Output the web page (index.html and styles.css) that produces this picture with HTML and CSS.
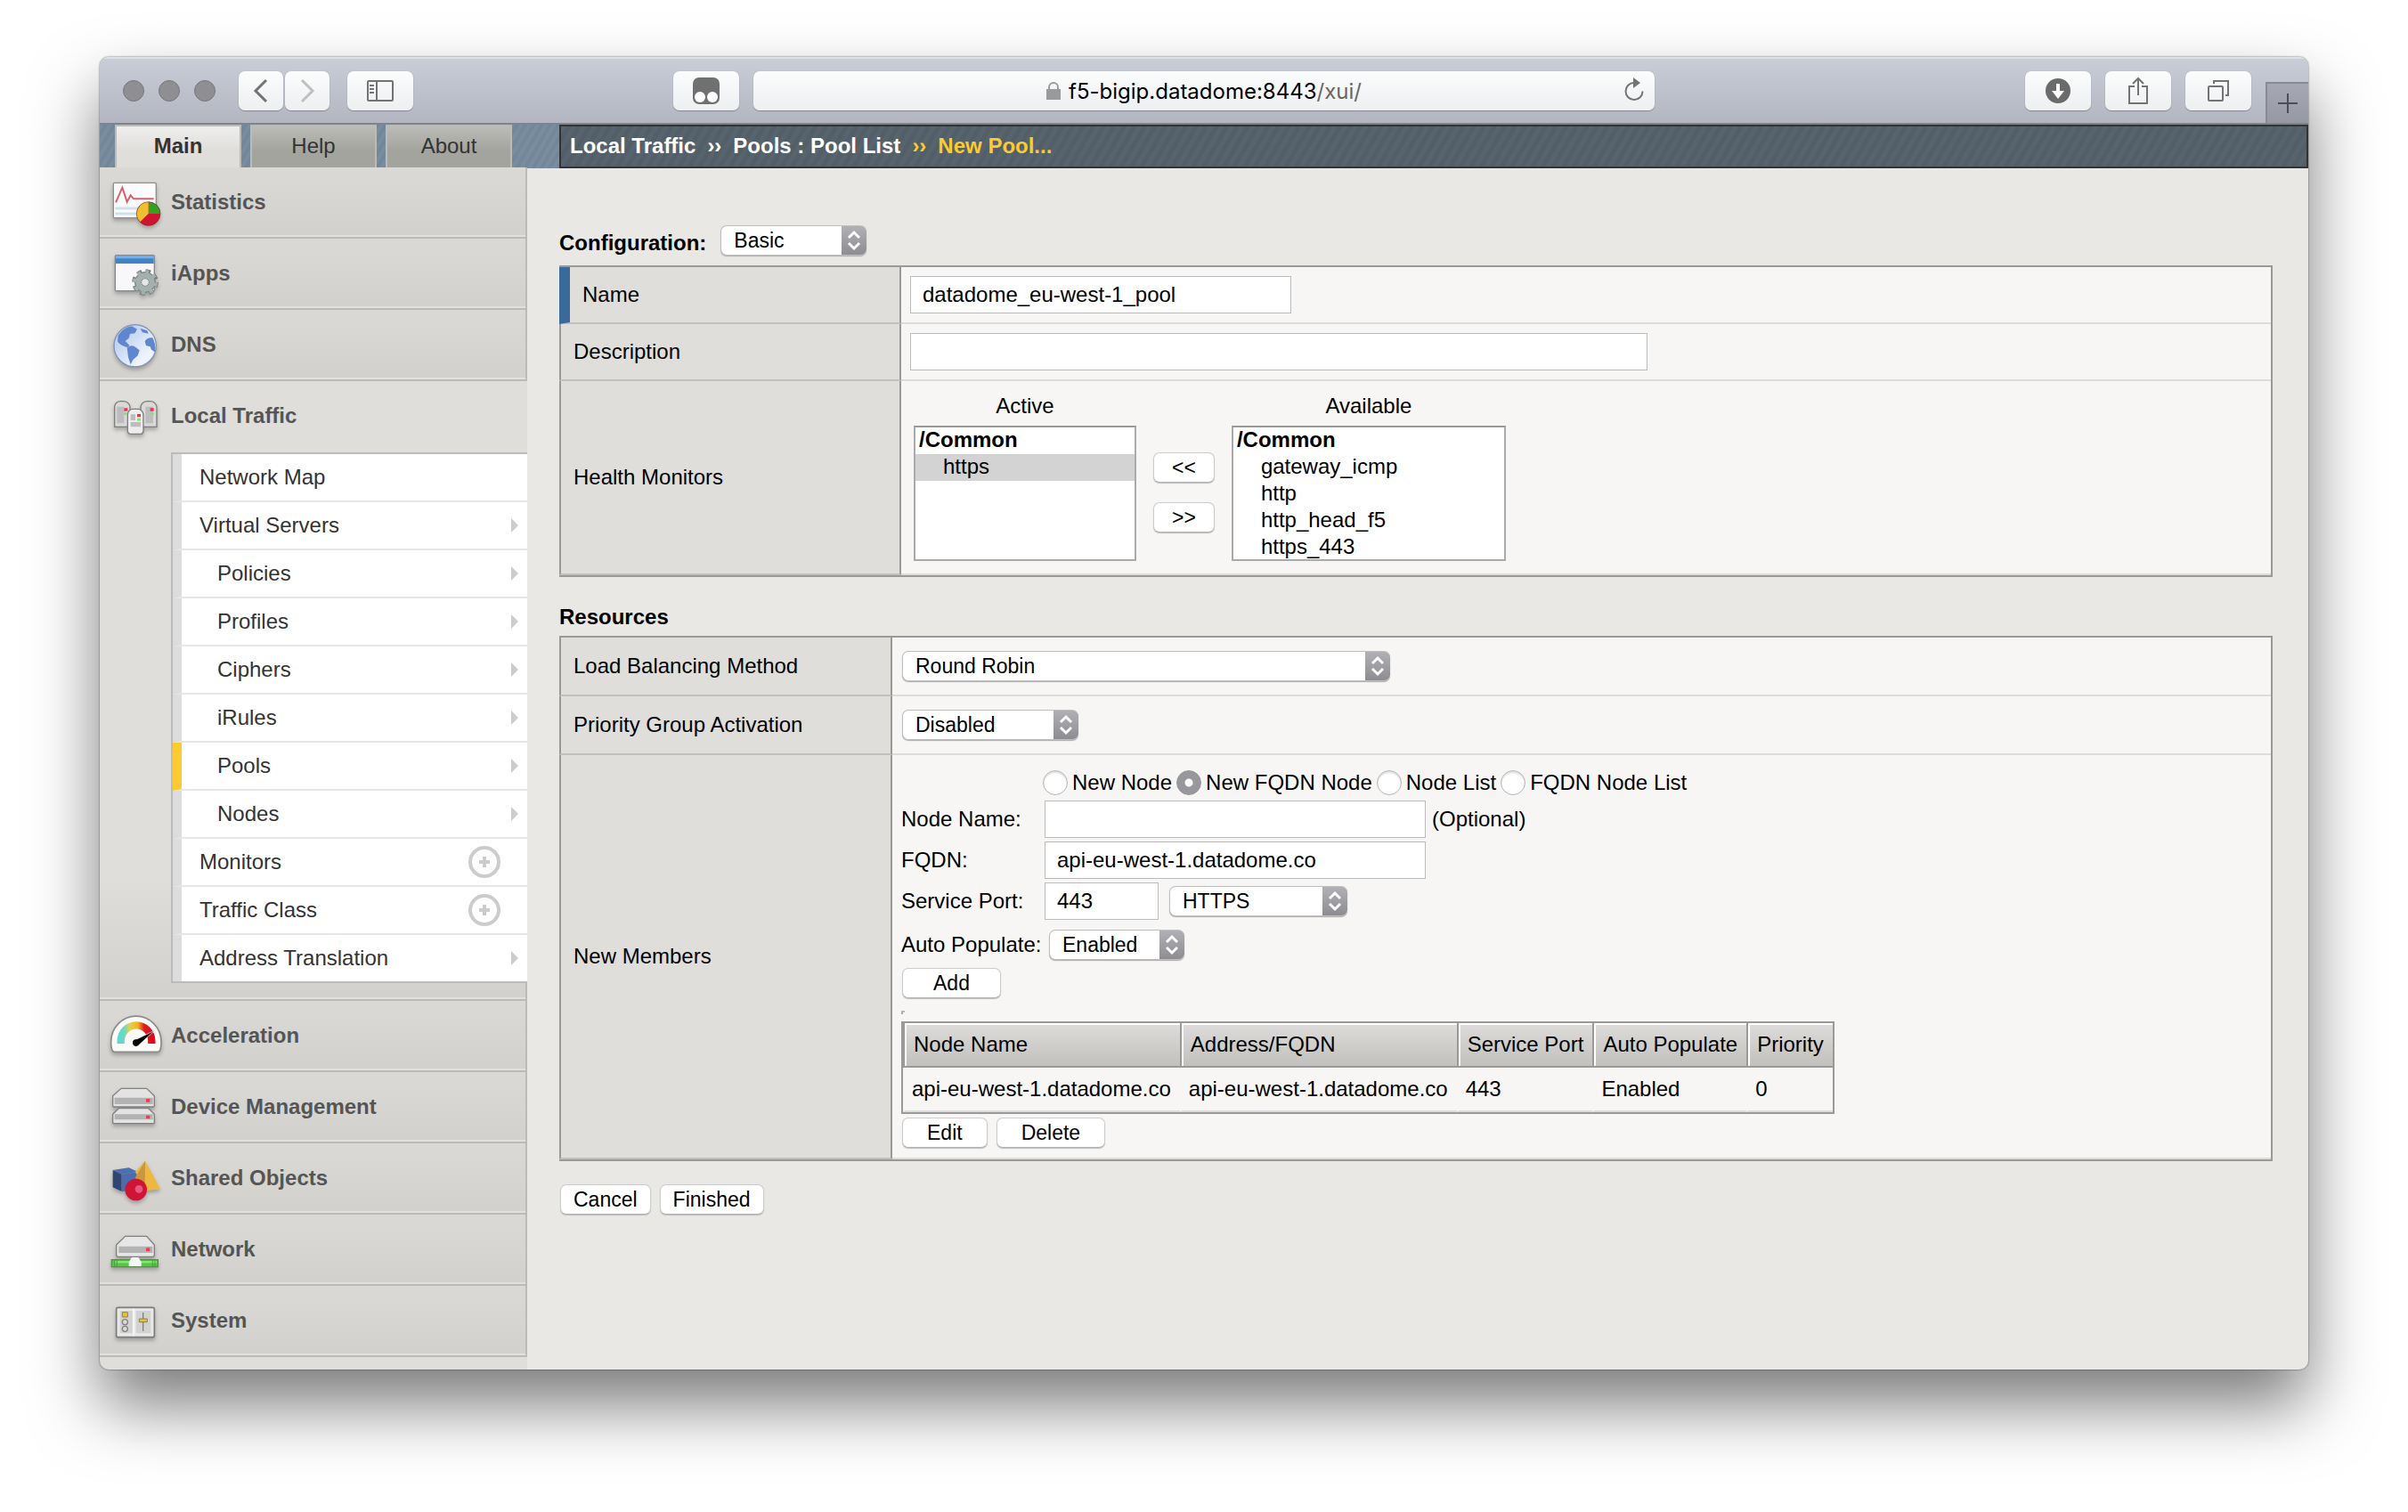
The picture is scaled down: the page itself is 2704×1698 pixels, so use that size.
FILE: index.html
```html
<!DOCTYPE html>
<html lang="en">
<head>
    <meta charset="UTF-8">
    <meta name="viewport" content="width=device-width, initial-scale=1.0">
    <title>BIG-IP - New Pool</title>
    <link rel="stylesheet" href="styles.css">
</head>
<body>
    <div class="window">
        <div class="toolbar">
            <div class="toolbar-side">
                <div class="lights"><span></span><span></span><span></span></div>
                <div class="nav-buttons">
                    <button type="button" class="tool-btn nav-btn" aria-label="Back">
                        <svg width="24" height="28" viewBox="0 0 24 28" fill="none" stroke="#737373" stroke-width="3"><path d="M18 2 6 14l12 12"/></svg>
                    </button>
                    <button type="button" class="tool-btn nav-btn" aria-label="Forward">
                        <svg width="24" height="28" viewBox="0 0 24 28" fill="none" stroke="#bfbfbf" stroke-width="3"><path d="M6 2l12 12L6 26"/></svg>
                    </button>
                </div>
                <button type="button" class="tool-btn" aria-label="Show sidebar">
                    <svg width="32" height="26" viewBox="0 0 32 26" fill="none" stroke="#737373" stroke-width="2"><rect x="2" y="2" width="28" height="22" rx="1"/><path d="M12 2v22M4 7h5M4 11h5M4 15h5"/></svg>
                </button>
                <button type="button" class="tool-btn extension-btn" aria-label="Extension">
                    <svg width="30" height="30" viewBox="0 0 30 30"><rect width="30" height="30" rx="7" fill="#707070"/><circle cx="8" cy="22" r="6" fill="#fff"/><circle cx="22" cy="22" r="6" fill="#fff"/></svg>
                </button>
            </div>
            <div class="address-bar">
                <svg width="16" height="20" viewBox="0 0 16 20"><rect y="8" width="16" height="12" fill="#9a9a9a"/><path d="M3 9V6a5 5 0 0 1 10 0v3" fill="none" stroke="#9a9a9a" stroke-width="2"/></svg>
                <div class="url">f5-bigip.datadome:8443<span class="url-path">/xui/</span></div>
                <button type="button" class="reload" aria-label="Reload">
                    <svg width="26" height="30" viewBox="0 0 26 30"><path d="M13 7a9.500 9.500 0 1 0 9.500 9.500" fill="none" stroke="#737373" stroke-width="2"/><path d="M12 1l8 6-8 6z" fill="#737373"/></svg>
                </button>
            </div>
            <div class="toolbar-side toolbar-right">
                <button type="button" class="tool-btn" aria-label="Downloads">
                    <svg width="28" height="28" viewBox="0 0 28 28"><circle cx="14" cy="14" r="14" fill="#6b6b6b"/><path d="M12 6h4v8h5l-7 9-7-9h5z" fill="#fff"/></svg>
                </button>
                <button type="button" class="tool-btn" aria-label="Share">
                    <svg width="24" height="32" viewBox="0 0 24 32" fill="none" stroke="#737373" stroke-width="2"><path d="M8 11H2v19h20V11h-6M12 21V2M6 8l6-6 6 6"/></svg>
                </button>
                <button type="button" class="tool-btn" aria-label="Show tabs">
                    <svg width="26" height="26" viewBox="0 0 26 26" fill="none" stroke="#737373" stroke-width="2"><rect x="2" y="8" width="16" height="16" rx="1"/><path d="M8 5V2h16v16h-3"/></svg>
                </button>
                <button type="button" class="new-tab" aria-label="New tab">
                    <svg width="24" height="24" viewBox="0 0 24 24" stroke="#4b4e57" stroke-width="2"><path d="M12 1v22M1 12h22"/></svg>
                </button>
            </div>
        </div>

        <div class="page">
            <aside class="sidebar">
                <nav class="tabs">
                    <a href="#" class="tab active">Main</a>
                    <a href="#" class="tab">Help</a>
                    <a href="#" class="tab">About</a>
                </nav>

                <ul class="menu">
                    <li class="menu-item">
                        <a href="#">
                            <svg class="menu-icon" viewBox="60 24 192 234">
                                <rect x="82" y="76" width="144" height="118" rx="4" fill="#fbfbfc" stroke="#8f8f8f" stroke-width="4"/>
                                <path d="M88 162h130M88 180h130" stroke="#cfe0ee" stroke-width="9"/>
                                <path d="M90 142l22-50 16 48 12-22 10 12h68" fill="none" stroke="#d8606c" stroke-width="6"/>
                                <circle cx="200" cy="180" r="40" fill="#cf1330"/>
                                <path d="M200 180v-40a40 40 0 0 1 40 40z" fill="#35a023"/>
                                <path d="M200 180v-40a40 40 0 0 0-28 68z" fill="#f0bf2f"/>
                                <circle cx="200" cy="180" r="40" fill="none" stroke="#55311c" stroke-opacity=".5" stroke-width="3"/>
                            </svg>
                            Statistics
                        </a>
                    </li>
                    <li class="menu-item">
                        <a href="#">
                            <svg class="menu-icon" viewBox="60 264 192 234">
                                <rect x="88" y="320" width="132" height="120" rx="4" fill="#f8f8fb" stroke="#85888c" stroke-width="4"/>
                                <path d="M90 322h128v26H90z" fill="#4383c4"/>
                                <path d="M90 322h128v9H90z" fill="#6fb1ea"/>
                                <circle cx="189" cy="411" r="38" fill="none" stroke="#6f7a78" stroke-width="13" stroke-dasharray="16 14"/>
                                <circle cx="189" cy="411" r="25" fill="none" stroke="#a3b0ae" stroke-width="22"/>
                                <circle cx="189" cy="411" r="34" fill="none" stroke="#6f7a78" stroke-width="3"/>
                                <circle cx="189" cy="411" r="36" fill="none" stroke="#a3b0ae" stroke-width="12" stroke-dasharray="12 16" stroke-dashoffset="-1"/>
                                <circle cx="189" cy="411" r="13" fill="#e4e6e8" stroke="#7c8785" stroke-width="3"/>
                            </svg>
                            iApps
                        </a>
                    </li>
                    <li class="menu-item">
                        <a href="#">
                            <svg class="menu-icon" viewBox="60 504 192 234">
                                <defs>
                                    <linearGradient id="globe" x1="0" y1="0" x2="1" y2="1"><stop offset="0" stop-color="#a9c2ee"/><stop offset=".75" stop-color="#eef3fd"/></linearGradient>
                                </defs>
                                <circle cx="155" cy="625" r="71" fill="url(#globe)" stroke="#7f93b8" stroke-width="4"/>
                                <path d="M98 590q18-28 46-31l18 10-8 14-16 2-4 14-12 10 14 14-6 8q-24-8-34-20z" fill="#5f86cf"/>
                                <path d="M128 632q12-12 26-4l16 12-6 18-16 14-8 16-8-24z" fill="#5f86cf"/>
                                <path d="M188 610q8-14 26-12 12 22 8 48l-12-8-4-10-14-4zM172 566l24 8 4 10-20-4z" fill="#5f86cf"/>
                            </svg>
                            DNS
                        </a>
                    </li>
                    <li class="menu-item open">
                        <a href="#">
                            <svg class="menu-icon" viewBox="60 744 192 234">
                                <g fill="#d9d9d9" stroke="#7e7e7a" stroke-width="4">
                                    <path d="M86 830q2-16 18-18h14q16 2 20 18v68H86zM174 830q4-16 20-18h14q16 2 20 18v68h-54z"/>
                                    <path d="M130 856q2-16 16-18h20q14 2 17 18v56q-2 10-8 10h-36q-8 0-9-10z" fill="#ededed"/>
                                </g>
                                <path d="M94 830h24v56H94zM190 830h26v56h-26zM140 856h16v20h-16zM140 882h34v16h-34z" fill="#bdbdbd"/>
                                <path d="M118 835h12v10h-12zM206 835h12v10h-12zM162 855h12v10h-12z" fill="#ea3350"/>
                                <path d="M118 849h10v9h-10zM206 849h12v9h-12zM162 869h12v9h-12z" fill="#8be078"/>
                            </svg>
                            Local Traffic
                        </a>
                        <ul class="submenu">
                            <li><a href="#">Network Map</a></li>
                            <li><a href="#" class="more">Virtual Servers</a></li>
                            <li><a href="#" class="more child">Policies</a></li>
                            <li><a href="#" class="more child">Profiles</a></li>
                            <li><a href="#" class="more child">Ciphers</a></li>
                            <li><a href="#" class="more child">iRules</a></li>
                            <li class="current"><a href="#" class="more child">Pools</a></li>
                            <li><a href="#" class="more child">Nodes</a></li>
                            <li>
                                <a href="#">Monitors</a>
                                <button type="button" class="create-btn" aria-label="Create monitor"><svg width="12" height="12" viewBox="0 0 12 12" stroke="#ccc" stroke-width="4"><path d="M6 0v12M0 6h12"/></svg></button>
                            </li>
                            <li>
                                <a href="#">Traffic Class</a>
                                <button type="button" class="create-btn" aria-label="Create traffic class"><svg width="12" height="12" viewBox="0 0 12 12" stroke="#ccc" stroke-width="4"><path d="M6 0v12M0 6h12"/></svg></button>
                            </li>
                            <li><a href="#" class="more">Address Translation</a></li>
                        </ul>
                        <div class="menu-end"></div>
                    </li>
                    <li class="menu-item">
                        <a href="#">
                            <svg class="menu-icon" viewBox="60 192 192 234">
                                <defs>
                                    <linearGradient id="gauge"><stop offset="0" stop-color="#5fd8d0"/><stop offset=".12" stop-color="#6fd8c0"/><stop offset=".28" stop-color="#e0d24a"/><stop offset=".55" stop-color="#f0b429"/><stop offset=".75" stop-color="#e0201c"/><stop offset="1" stop-color="#dc0a20"/></linearGradient>
                                </defs>
                                <path d="M74 330a84 86 0 0 1 169 0q0 20-4 28-2 6-8 6H86q-6 0-8-6-4-8-4-28z" fill="#fafaf8" stroke="#8b8b89" stroke-width="5"/>
                                <path d="M107 336v-8a52 54 0 0 1 104 0v8" fill="none" stroke="url(#gauge)" stroke-width="25"/>
                                <path d="M222 291l-69 34a10 10 0 0 0 12 18z" fill="#000" stroke="#fff" stroke-width="2"/>
                                <circle cx="158" cy="333" r="11"/>
                            </svg>
                            Acceleration
                        </a>
                    </li>
                    <li class="menu-item">
                        <a href="#">
                            <svg class="menu-icon" viewBox="60 432 192 234">
                                <g stroke="#80807e" stroke-width="4" fill="#e3e3e3">
                                    <path d="M80 574l20-20h100l20 20v28q0 3-3 3H83q-3 0-3-3z"/>
                                    <path d="M80 512l28-25h86l26 25v33q0 4-4 4H84q-4 0-4-4z"/>
                                </g>
                                <path d="M86 518h129v22H86zM86 574h129v18H86z" fill="#b3b3b3"/>
                                <path d="M192 522h13v11h-13zM192 578h13v11h-13z" fill="#f03c50"/>
                            </svg>
                            Device Management
                        </a>
                    </li>
                    <li class="menu-item">
                        <a href="#">
                            <svg class="menu-icon" viewBox="60 672 192 234">
                                <path d="M80 762l54-8 30 14-54 8z" fill="#4e6fae"/>
                                <path d="M80 762l30 14v58l-30-14z" fill="#2f4574"/>
                                <path d="M110 776l54-8v60l-54 6z" fill="#4a6db2"/>
                                <path d="M189 731l51 95-52 6-32-64z" fill="#efb73e"/>
                                <path d="M189 731l-33 55 8 40 24 6z" fill="#c9973c"/>
                                <circle cx="158" cy="828" r="37" fill="#cf1436"/>
                                <circle cx="168" cy="826" r="13" fill="#ea5684"/>
                            </svg>
                            Shared Objects
                        </a>
                    </li>
                    <li class="menu-item">
                        <a href="#">
                            <svg class="menu-icon" viewBox="60 912 192 234">
                                <path d="M92 1014l30-29h72l26 29v34q0 6-6 6H98q-6 0-6-6z" fill="#e6e6e6" stroke="#80807e" stroke-width="4"/>
                                <path d="M100 1019h114v22H100z" fill="#b3b3b3"/>
                                <path d="M192 1024h13v11h-13z" fill="#f03c50"/>
                                <rect x="76" y="1064" width="156" height="24" fill="#53c840" stroke="#5d8c55" stroke-width="4"/>
                                <path d="M88 1072h140" stroke="#86f070" stroke-width="6"/>
                                <path d="M94 1064v24M214 1064v24M222 1064v24M86 1064v24" stroke="#4f9b43" stroke-width="3"/>
                                <path d="M134 1086v-14l10-16h22l10 16v14z" fill="#f6f6f6"/>
                            </svg>
                            Network
                        </a>
                    </li>
                    <li class="menu-item">
                        <a href="#">
                            <svg class="menu-icon" viewBox="60 1152 192 234">
                                <rect x="92" y="1225" width="128" height="100" rx="5" fill="#e9e9e9" stroke="#7c7c7a" stroke-width="5"/>
                                <path d="M104 1236h42v76h-42zM158 1236h50v76h-50z" fill="#d2d2d2"/>
                                <path d="M150 1228v94" stroke="#fff" stroke-width="3"/>
                                <g fill="#dcdcdc" stroke="#808080" stroke-width="4"><circle cx="121" cy="1274" r="9"/><circle cx="121" cy="1297" r="9"/><path d="M182 1242v62"/></g>
                                <path d="M112 1241h18v16h-18zM169 1263h27v11h-27z" fill="#e6c32c" stroke="#8b8254" stroke-width="3"/>
                            </svg>
                            System
                        </a>
                    </li>
                </ul>
            </aside>

            <main class="main">
                <div class="breadcrumb">
                    <a href="#">Local Traffic</a>
                    <span>&rsaquo;&rsaquo;</span>
                    <a href="#">Pools : Pool List</a>
                    <span class="here">&rsaquo;&rsaquo;</span>
                    <span class="here">New Pool...</span>
                </div>

                <form class="content">
                    <div class="section-title with-select">
                        <label for="configMode">Configuration:</label>
                        <select id="configMode" class="select w-164"><option>Basic</option></select>
                    </div>
                    <table class="settings">
                        <tr>
                            <th class="required" scope="row"><label for="poolName">Name</label></th>
                            <td><input type="text" class="text-input w-428" id="poolName" value="datadome_eu-west-1_pool"></td>
                        </tr>
                        <tr>
                            <th scope="row"><label for="description">Description</label></th>
                            <td><input type="text" class="text-input w-828" id="description"></td>
                        </tr>
                        <tr>
                            <th scope="row">Health Monitors</th>
                            <td>
                                <div class="monitors">
                                    <div class="monitor-list">
                                        <label for="activeMonitors">Active</label>
                                        <select id="activeMonitors" class="list w-250" multiple size="5">
                                            <optgroup label="/Common">
                                                <option selected>https</option>
                                            </optgroup>
                                        </select>
                                    </div>
                                    <div class="move-buttons">
                                        <button type="button" class="btn btn-move">&lt;&lt;</button>
                                        <button type="button" class="btn btn-move">&gt;&gt;</button>
                                    </div>
                                    <div class="monitor-list">
                                        <label for="availableMonitors">Available</label>
                                        <select id="availableMonitors" class="list w-308" multiple size="5">
                                            <optgroup label="/Common">
                                                <option>gateway_icmp</option>
                                                <option>http</option>
                                                <option>http_head_f5</option>
                                                <option>https_443</option>
                                            </optgroup>
                                        </select>
                                    </div>
                                </div>
                            </td>
                        </tr>
                    </table>

                    <div class="section-title resources-title">Resources</div>
                    <table class="settings resources">
                        <tr>
                            <th scope="row"><label for="lbMethod">Load Balancing Method</label></th>
                            <td><select id="lbMethod" class="select w-548"><option>Round Robin</option></select></td>
                        </tr>
                        <tr>
                            <th scope="row"><label for="priorityGroup">Priority Group Activation</label></th>
                            <td><select id="priorityGroup" class="select w-198"><option>Disabled</option></select></td>
                        </tr>
                        <tr>
                            <th scope="row">New Members</th>
                            <td class="members-cell">
                                <div class="radio-row">
                                    <label><input type="radio" name="nodeType">New Node</label>
                                    <label><input type="radio" name="nodeType" checked>New FQDN Node</label>
                                    <label><input type="radio" name="nodeType">Node List</label>
                                    <label><input type="radio" name="nodeType">FQDN Node List</label>
                                </div>
                                <div class="field-row">
                                    <label for="nodeName">Node Name:</label>
                                    <input type="text" class="text-input w-428" id="nodeName">
                                    <span class="note">(Optional)</span>
                                </div>
                                <div class="field-row">
                                    <label for="fqdn">FQDN:</label>
                                    <input type="text" class="text-input w-428" id="fqdn" value="api-eu-west-1.datadome.co">
                                </div>
                                <div class="field-row">
                                    <label for="servicePort">Service Port:</label>
                                    <input type="text" class="text-input w-128" id="servicePort" value="443">
                                    <select class="select port-select w-200" aria-label="Service"><option>HTTPS</option></select>
                                </div>
                                <div class="field-row auto-row">
                                    <label for="autoPopulate">Auto Populate:</label>
                                    <select id="autoPopulate" class="select w-152"><option>Enabled</option></select>
                                </div>
                                <div class="button-row">
                                    <button type="button" class="btn btn-add">Add</button>
                                </div>
                                <div class="empty-grid"></div>
                                <table class="members">
                                    <thead>
                                        <tr>
                                            <th>Node Name</th>
                                            <th>Address/FQDN</th>
                                            <th>Service Port</th>
                                            <th>Auto Populate</th>
                                            <th>Priority</th>
                                        </tr>
                                    </thead>
                                    <tbody>
                                        <tr>
                                            <td>api-eu-west-1.datadome.co</td>
                                            <td>api-eu-west-1.datadome.co</td>
                                            <td>443</td>
                                            <td>Enabled</td>
                                            <td>0</td>
                                        </tr>
                                    </tbody>
                                </table>
                                <div class="button-row">
                                    <button type="button" class="btn btn-row">Edit</button>
                                    <button type="button" class="btn btn-row">Delete</button>
                                </div>
                            </td>
                        </tr>
                    </table>

                    <div class="button-row form-actions">
                        <button type="button" class="btn">Cancel</button>
                        <button type="button" class="btn">Finished</button>
                    </div>
                </form>
            </main>
        </div>
    </div>
</body>
</html>
```
FILE: styles.css
```css
* {
    margin: 0;
    padding: 0;
    box-sizing: border-box;
}

body {
    font-family: "Liberation Sans", Arial, Helvetica, sans-serif;
    font-size: 24px;
    line-height: 28px;
    color: #000;
    background: #fff;
    padding: 64px 112px 160px;
}

a {
    color: inherit;
    text-decoration: none;
}

ul {
    list-style: none;
}

svg {
    display: block;
}

button,
input,
select {
    font-family: inherit;
    color: inherit;
}

.window {
    border-radius: 10px;
    overflow: hidden;
    background: #e9e8e4;
    box-shadow: 0 0 2px rgba(0, 0, 0, 0.7), 0 40px 76px rgba(0, 0, 0, 0.52);
}

/* Browser toolbar */
.toolbar {
    display: grid;
    grid-template-columns: 1fr minmax(0, 1012px) 1fr;
    column-gap: 16px;
    align-items: center;
    height: 76px;
    background: linear-gradient(#c9cdd7, #b3b6c0);
    border-top: 2px solid #dfe1e7;
    border-bottom: 2px solid #80838d;
}

.toolbar-side {
    display: flex;
    align-items: center;
    height: 100%;
    gap: 20px;
    padding-left: 26px;
}

.toolbar-right {
    justify-content: flex-end;
    gap: 16px;
}

.lights {
    display: flex;
    gap: 16px;
    margin-right: 6px;
}

.lights span {
    width: 24px;
    height: 24px;
    border-radius: 50%;
    background: #8f8e93;
    border: 1px solid #77767b;
}

.nav-buttons {
    display: flex;
    gap: 2px;
}

.tool-btn {
    display: flex;
    align-items: center;
    justify-content: center;
    width: 74px;
    height: 44px;
    border: none;
    border-radius: 7px;
    background: linear-gradient(#fbfcfc, #eeeff1);
    box-shadow: 0 1px 1px #85878f, 0 0 1px #a3a6b1;
}

.nav-btn {
    width: 50px;
}

.extension-btn {
    margin-left: auto;
}

.address-bar {
    display: flex;
    align-items: center;
    justify-content: center;
    gap: 9px;
    height: 44px;
    position: relative;
    border-radius: 7px;
    background: linear-gradient(#fbfcfc, #eeeff1);
    box-shadow: 0 1px 1px #85878f, 0 0 1px #a3a6b1;
}

.url {
    padding-top: 2px;
    font-family: Inter, Roboto, sans-serif;
    font-size: 24px;
}

.url-path {
    color: #666;
}

.reload {
    position: absolute;
    right: 10px;
    top: 6px;
    border: none;
    background: none;
}

.new-tab {
    display: flex;
    align-items: center;
    justify-content: center;
    align-self: flex-end;
    width: 48px;
    height: 46px;
    border: none;
    border-top: 2px solid #888b95;
    border-left: 2px solid #888b95;
    background: linear-gradient(#a6a9b3, #9699a3);
}

/* Page frame */
.page {
    display: flex;
    background-color: #73879a;
    background-image: repeating-linear-gradient(120deg, rgba(255, 255, 255, 0.05) 0 4px, transparent 4px 8px);
}

.sidebar {
    display: flex;
    flex-direction: column;
    flex: none;
    width: 480px;
}

.tabs {
    display: flex;
    gap: 10px;
    height: 48px;
    padding-left: 17px;
}

.tab {
    width: 142px;
    padding-top: 8px;
    text-align: center;
    color: #333;
    background: linear-gradient(#bbbbb7, #a3a49e 60%);
    border: 2px solid #bbb;
    border-bottom: none;
}

.tab.active {
    font-weight: bold;
    background: linear-gradient(#eeeeed, #dfdeda 60%);
}

.menu {
    flex: 1;
    padding-bottom: 14px;
    background: #dfdeda;
}

.menu-item {
    background: linear-gradient(#dad9d5, #d2d1cd);
    border-right: 2px solid #bbb;
    border-bottom: 2px solid #bbb;
    box-shadow: inset 0 -2px #e2e1de;
}

.menu-item > a {
    display: flex;
    align-items: center;
    gap: 8px;
    padding-left: 8px;
    line-height: 30px;
    color: #555;
    font-weight: bold;
}

.menu-icon {
    width: 64px;
    height: 78px;
    filter: drop-shadow(0 3px 2px rgba(0, 0, 0, 0.25));
}

.menu-item.open {
    background: linear-gradient(#dfdeda 80%, #d2d1cd);
    border-right: none;
}

.menu-item.open > a {
    padding-bottom: 2px;
}

.menu-end {
    height: 18px;
    border-right: 2px solid #bbb;
}

.submenu {
    margin-left: 80px;
    border: 2px solid #bbb;
    border-right: none;
    background: #fff;
}

.submenu li {
    display: flex;
    align-items: center;
    height: 54px;
    border-left: 10px solid #dcdcdd;
    border-bottom: 2px solid #e6e6e6;
}

.submenu li:last-child {
    height: 52px;
    border-bottom: none;
}

.submenu li.current {
    border-left-color: #fdca30;
}

.submenu a {
    display: flex;
    align-items: center;
    justify-content: space-between;
    flex: 1;
    padding: 0 10px 0 20px;
    color: #333;
}

.submenu a.child {
    padding-left: 40px;
}

.submenu a.more::after {
    content: "";
    border-left: 8px solid #ccc;
    border-top: 8px solid transparent;
    border-bottom: 8px solid transparent;
}

.create-btn {
    display: flex;
    align-items: center;
    justify-content: center;
    width: 36px;
    height: 36px;
    margin-right: 30px;
    border: 4px solid #ccc;
    border-radius: 50%;
    background: #fff;
}

/* Main column */
.main {
    flex: 1;
    min-width: 0;
    display: flex;
    flex-direction: column;
}

.breadcrumb {
    display: flex;
    align-items: center;
    gap: 13px;
    height: 49px;
    margin-left: 36px;
    padding: 0 10px 2px;
    border: 2px solid #333;
    background-color: #525e68;
    background-image: repeating-linear-gradient(120deg, rgba(255, 255, 255, 0.03) 0 5px, transparent 5px 10px);
    color: #fff;
    font-weight: bold;
}

.breadcrumb .here {
    color: #fdca30;
}

.content {
    flex: 1;
    padding: 59px 40px 40px 36px;
    background: #e9e8e4;
}

.section-title {
    display: flex;
    align-items: center;
    height: 42px;
    font-weight: bold;
}

.with-select {
    height: 50px;
    gap: 16px;
}

.with-select .select {
    margin: 0 0 6px;
}

.resources-title {
    margin-top: 24px;
}

.settings {
    width: 100%;
    border-spacing: 0;
    border: 2px solid #999;
    border-left: none;
    background: #f7f6f4;
}

.settings > tbody > tr > th {
    width: 384px;
    padding-left: 14px;
    text-align: left;
    font-weight: normal;
    background: #dfdeda;
    border-left: 2px solid #999;
    border-right: 2px solid #999;
    border-bottom: 2px solid #c1c0bd;
}

.settings > tbody > tr > th.required {
    border-left: 12px solid #396a9a;
}

.settings > tbody > tr > td {
    padding: 10px;
    border-bottom: 2px solid #dcdcda;
}

.resources > tbody > tr > th {
    width: 374px;
}

.resources > tbody > tr > td {
    height: 66px;
}

/* Form controls */
.text-input {
    display: block;
    height: 42px;
    padding: 0 13px;
    font-size: 24px;
    background: #fff;
    border: 1px solid #bbb;
}

.select {
    display: block;
    appearance: none;
    height: 34px;
    margin: 0 1px;
    padding: 0 40px 0 14px;
    font-size: 23px;
    line-height: 32px;
    border: 1px solid #bfbfbf;
    border-right: none;
    border-radius: 7px;
    background:
        url("data:image/svg+xml,%3Csvg xmlns='http://www.w3.org/2000/svg' width='28' height='34' fill='none' stroke='white' stroke-width='3'%3E%3Cpath d='M8 14l6-6 6 6M8 20l6 6 6-6'/%3E%3C/svg%3E") right center no-repeat,
        linear-gradient(#b1b1b6, #8b8b90) right / 28px 100% no-repeat,
        #fff;
    background-origin: border-box;
    box-shadow: 0 1px 1px #aaa;
}

.btn {
    height: 34px;
    padding: 0 14px;
    font-size: 23px;
    line-height: 32px;
    background: #fff;
    border: 1px solid #ccc;
    border-bottom-color: #b4b4b4;
    border-radius: 7px;
    box-shadow: 0 1px 1px #bbb;
}

.btn-move {
    padding: 0 20px;
}

.btn-add {
    padding: 0 34px;
}

.btn-row {
    padding: 0 27px;
}

.w-128 { width: 128px; }
.w-152 { width: 152px; }
.w-164 { width: 164px; }
.w-198 { width: 198px; }
.w-200 { width: 200px; }
.w-250 { width: 250px; }
.w-308 { width: 308px; }
.w-428 { width: 428px; }
.w-548 { width: 548px; }
.w-828 { width: 828px; }

.monitors {
    display: flex;
    gap: 19px;
    padding: 0 4px 4px;
}

.monitor-list {
    display: flex;
    flex-direction: column;
    text-align: center;
}

.monitor-list label {
    height: 40px;
    line-height: 35px;
}

.list {
    height: 152px;
    overflow: hidden;
    font-size: 24px;
    text-align: left;
    background: #fff;
    border: 2px solid #aaa;
    border-top-color: #999;
    border-radius: 0;
}

.list optgroup {
    padding-left: 2px;
    line-height: 30px;
}

.list option {
    height: 30px;
    min-height: 30px;
    margin-left: -2px;
    padding: 0 4px 0 31px;
    line-height: 28px;
}

.list option:checked {
    background: linear-gradient(#d3d3d3, #d3d3d3);
    color: #000;
}

.move-buttons {
    display: flex;
    flex-direction: column;
    gap: 22px;
    padding-top: 70px;
}

/* New members */
.settings > tbody > tr > .members-cell {
    padding: 11px 10px;
}

.radio-row {
    display: flex;
    align-items: center;
    gap: 5px;
    height: 40px;
    padding-left: 159px;
}

.radio-row label {
    display: flex;
    align-items: center;
    gap: 5px;
}

.radio-row input {
    appearance: none;
    width: 28px;
    height: 28px;
    border: 1px solid #b4b4b4;
    border-radius: 50%;
    background: #fff;
    box-shadow: inset 0 2px 2px #ddd;
}

.radio-row input:checked {
    border-color: #98979c;
    background: radial-gradient(circle, #fff 4px, #98979c 5px);
    box-shadow: none;
}

.field-row {
    display: flex;
    align-items: center;
    height: 42px;
    margin-bottom: 4px;
}

.field-row label {
    width: 161px;
}

.note {
    margin-left: 7px;
}

.field-row .port-select {
    margin-left: 12px;
}

.auto-row {
    height: 48px;
    margin-bottom: 2px;
}

.auto-row label {
    width: 165px;
}

.button-row {
    display: flex;
    gap: 10px;
    padding: 0 1px;
}

.empty-grid {
    width: 4px;
    height: 4px;
    margin: 14px 0 8px;
    border-top: 2px solid #bbb;
    border-left: 2px solid #aaa;
}

.members {
    margin-bottom: 4px;
    border-spacing: 0;
    border: 2px solid #999;
}

.members th,
.members td {
    padding: 10px 10px 10px 8px;
    text-align: left;
    font-weight: normal;
    border-left: 2px solid transparent;
    border-bottom: 2px solid #dcdcda;
}

.members th {
    padding-left: 10px;
    background: linear-gradient(#dedddb, #c1c0bc);
    border-left-color: #999;
    border-bottom-color: #999;
    box-shadow: inset 2px 2px #fff;
}

.form-actions {
    margin-top: 26px;
}
```
